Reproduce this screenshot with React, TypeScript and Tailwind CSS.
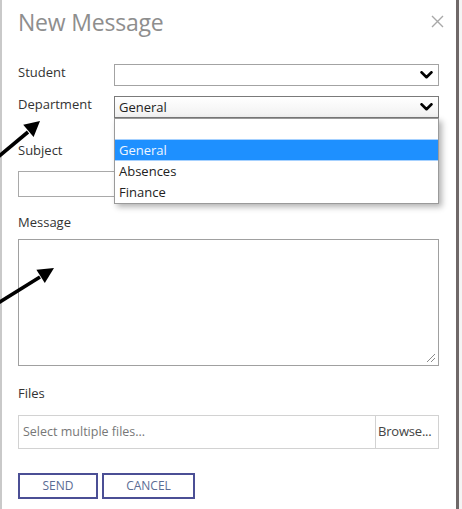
import React from "react";

function Chevron() {
  return (
    <svg width="13" height="8" viewBox="0 0 13 8" className="shrink-0">
      <path d="M1.5 1.3 L6.5 6.2 L11.5 1.3" stroke="#000" strokeWidth="2.6" fill="none" strokeLinecap="round" strokeLinejoin="round" />
    </svg>
  );
}

function CloseIcon() {
  return (
    <svg width="13" height="13" viewBox="0 0 13 13">
      <path d="M1 1 L12 12 M12 1 L1 12" stroke="#a8a8a8" strokeWidth="1.4" />
    </svg>
  );
}

function ResizeGrip() {
  return (
    <svg width="12" height="12" viewBox="0 0 12 12" className="absolute right-[2px] bottom-[2px]">
      <path d="M11 3 L3 11 M11 7 L7 11" stroke="#8a8a8a" strokeWidth="1" />
    </svg>
  );
}

// Annotation arrows drawn over the form
function Arrows() {
  return (
    <svg width="462" height="509" className="absolute left-0 top-0 pointer-events-none">
      <line x1="-2" y1="157" x2="28" y2="132" stroke="#000" strokeWidth="3.6" />
      <polygon points="40,121 33.6,137 23.2,124.8" fill="#000" />
      <line x1="-2" y1="303" x2="40" y2="277" stroke="#000" strokeWidth="3.6" />
      <polygon points="54,268 44.8,283 36.4,269.8" fill="#000" />
    </svg>
  );
}

export default function App() {
  return (
    <div className="relative w-[462px] h-[509px] overflow-hidden bg-[#f4f4f4] font-['Open_Sans',sans-serif] text-[#333]">
      <div className="w-[459px] h-[509px] bg-white border-l-2 border-l-[#c9c9c9] border-r-[3px] border-r-[#6f6868] pl-[16px] pr-[17px] flex flex-col">
        {/* Header */}
        <div className="flex items-start justify-between pt-[6px]">
          <div className="text-[23px] leading-[32px] text-[#8e8e8e] tracking-[-0.2px]">New Message</div>
          <div className="pt-[9px] mr-[-5px]">
            <CloseIcon />
          </div>
        </div>

        {/* Student */}
        <div className="flex mt-[26px] h-[22px]">
          <div className="w-[96px] text-[13px] leading-[17px]">Student</div>
          <div className="flex-1 border border-[#a3a3a3] flex items-center justify-end pr-[5px]">
            <Chevron />
          </div>
        </div>

        {/* Department with open list */}
        <div className="relative flex mt-[10px] h-[22px]">
          <div className="w-[96px] text-[13px] leading-[17px]">Department</div>
          <div className="flex-1 border border-[#7a7a7a] bg-gradient-to-b from-white to-[#f1f1f1] flex items-center justify-between pl-[4px] pr-[5px]">
            <span className="text-[13px] leading-[20px] text-[#222]">General</span>
            <Chevron />
          </div>
          <div className="absolute left-[96px] right-0 top-[22px] z-10 bg-white border border-[#9a9a9a] shadow-[3px_3px_6px_rgba(0,0,0,0.3)] text-[13px] text-[#222]">
            <div className="h-[20px]" />
            <div className="h-[22px] leading-[21px] pl-[4px] bg-[#1e90ff] border-y border-[#a6d1ff] text-[#eef6ff]">General</div>
            <div className="h-[21px] leading-[21px] pl-[4px]">Absences</div>
            <div className="h-[21px] leading-[21px] pl-[4px]">Finance</div>
          </div>
        </div>

        {/* Subject */}
        <div className="mt-[24px] text-[13px] leading-[17px]">Subject</div>
        <div className="mt-[12px] h-[26px] border border-[#a9a9a9]" />

        {/* Message */}
        <div className="mt-[17px] text-[13px] leading-[17px]">Message</div>
        <div className="relative mt-[8px] h-[127px] border border-[#a0a0a0]">
          <ResizeGrip />
        </div>

        {/* Files */}
        <div className="mt-[19px] text-[13px] leading-[17px]">Files</div>
        <div className="mt-[13px] h-[34px] border border-[#d2d2d2] flex">
          <div className="flex-1 flex items-center pl-[4px] text-[12.5px] text-[#777]">Select multiple files...</div>
          <div className="w-[63px] border-l border-[#d2d2d2] flex items-center pl-[2px] text-[13px] text-[#444] tracking-[-0.2px]">Browse...</div>
        </div>

        {/* Actions */}
        <div className="mt-[24px] flex gap-[4px]">
          <button className="w-[80px] h-[26px] border-2 border-[#4b4f95] text-[12px] text-[#5a6c94] flex items-center justify-center">SEND</button>
          <button className="w-[93px] h-[26px] border-2 border-[#4b4f95] text-[12px] text-[#5a6c94] flex items-center justify-center">CANCEL</button>
        </div>
      </div>
      <Arrows />
    </div>
  );
}
